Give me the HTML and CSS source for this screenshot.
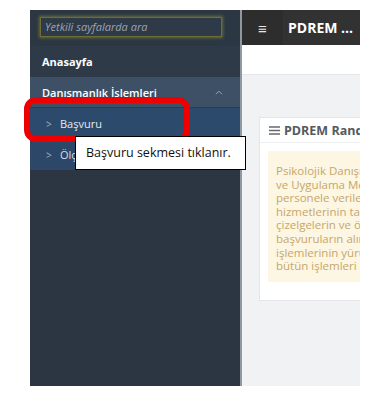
FILE: index.html
```html
<!DOCTYPE html>
<html lang="tr">
<head>
<meta charset="utf-8">
<title>PDREM</title>
<link rel="stylesheet" href="styles.css">
</head>
<body>
<div class="stage">
  <div class="frame">
    <aside class="sidebar">
      <div class="search">
        <div class="search-input">Yetkili sayfalarda ara</div>
      </div>
      <div class="nav-item">Anasayfa</div>
      <div class="nav-group">
        <span>Danışmanlık İşlemleri</span>
        <svg class="chev" width="8" height="5" viewBox="0 0 8 5"><path d="M1 4.2 L4 1.2 L7 4.2" fill="none" stroke="#9aa7b5" stroke-width="1"/></svg>
      </div>
      <div class="sub-item sub-active"><span class="arrow">&gt;</span><span>Başvuru</span></div>
      <div class="sub-item"><span class="arrow">&gt;</span><span>Ölçekler</span></div>
    </aside>
    <main class="main">
      <header class="topbar">
        <div class="toggler">&#8801;</div>
        <div class="brand">PDREM ...</div>
      </header>
      <div class="pagebar"></div>
      <div class="content">
        <section class="card">
          <div class="card-head">
            <svg class="bars" width="11" height="9" viewBox="0 0 11 9"><path d="M0 1 H11 M0 4.5 H11 M0 8 H11" stroke="#666a70" stroke-width="1.4"/></svg>
            <span>PDREM Randevu Sistemi</span>
          </div>
          <div class="card-body">
            <div class="alert">
              <span class="line">Psikolojik Danışmanlık ve Rehberlik Eğitimi</span>
              <span class="line">ve Uygulama Merkezi tarafından öğrenci ve</span>
              <span class="line">personele verilen danışmanlık</span>
              <span class="line">hizmetlerinin takibi, randevu</span>
              <span class="line">çizelgelerin ve ölçeklerin hazırlanması,</span>
              <span class="line">başvuruların alınması ve değerlendirme</span>
              <span class="line">işlemlerinin yürütülmesi gibi</span>
              <span class="line">bütün işlemleri bu sistem üzerinden yapılır.</span>
            </div>
          </div>
        </section>
      </div>
    </main>
  </div>
  <div class="highlight"></div>
  <div class="callout">Başvuru sekmesi tıklanır.</div>
</div>
</body>
</html>
```
FILE: styles.css
```css
html, body {
  margin: 0;
  padding: 0;
  background: #ffffff;
}
.stage {
  position: relative;
  width: 379px;
  height: 403px;
  overflow: hidden;
  font-family: "Open Sans", "Noto Sans", sans-serif;
}
.frame {
  position: relative;
  margin: 10px 0 0 30px;
  width: 330px;
  height: 376px;
  display: flex;
  overflow: hidden;
}
.sidebar {
  width: 210px;
  flex: none;
  background: #2c3642;
  border-right: 2px solid #8e99a4;
  display: flex;
  flex-direction: column;
}
.search {
  height: 36px;
  box-sizing: border-box;
  padding: 7px 18px 0 10px;
  background: #2c3744;
}
.search-input {
  height: 20px;
  box-sizing: border-box;
  border: 1px solid #6e6d34;
  box-shadow: 0 0 3px 1px rgba(150, 150, 50, 0.55);
  background: #2e3a48;
  color: #9aa5b1;
  font-style: italic;
  font-size: 11px;
  line-height: 18px;
  padding-left: 4px;
}
.nav-item {
  height: 31px;
  display: flex;
  align-items: center;
  padding-left: 12px;
  color: #ffffff;
  font-weight: 700;
  font-size: 11px;
  background: #2e3a48;
}
.nav-group {
  height: 30px;
  display: flex;
  align-items: center;
  justify-content: space-between;
  padding: 0 17px 0 12px;
  background: #3d5065;
  color: #ffffff;
  font-weight: 600;
  font-size: 11px;
  border-bottom: 1px solid #2d3c4c;
}
.sub-item {
  height: 31px;
  display: flex;
  align-items: center;
  padding-left: 16px;
  background: #2c4767;
  color: #d8dee5;
  font-size: 11px;
}
.sub-active {
  background: #2b4a6c;
  color: #e6ebf0;
}
.arrow {
  width: 14px;
  color: #a9b4c0;
  font-size: 10px;
}
.main {
  flex: 1;
  min-width: 0;
  background: #f1f2f4;
  display: flex;
  flex-direction: column;
}
.topbar {
  height: 35px;
  flex: none;
  display: flex;
  align-items: center;
  background: #323232;
}
.toggler {
  width: 41px;
  height: 100%;
  display: flex;
  align-items: center;
  justify-content: center;
  background: #2d2d2d;
  color: #e8e8e8;
  font-size: 15px;
}
.brand {
  padding-left: 5px;
  color: #ffffff;
  font-weight: 700;
  font-size: 14px;
  white-space: nowrap;
}
.pagebar {
  height: 29px;
  flex: none;
  background: #ffffff;
  border-bottom: 1px solid #e4e6e9;
}
.content {
  padding: 42px 0 0 17px;
}
.card {
  width: 300px;
  background: #ffffff;
  border: 1px solid #e3e5e8;
}
.card-head {
  height: 24px;
  padding-left: 9px;
  display: flex;
  align-items: center;
  gap: 4px;
  border-bottom: 1px solid #eceef0;
  color: #555a60;
  font-weight: 700;
  font-size: 12.5px;
  white-space: nowrap;
}
.bars {
  flex: none;
}
.card-body {
  padding: 8px 0 18px 8px;
}
.alert {
  height: 131px;
  box-sizing: border-box;
  padding: 13px 0 0 8px;
  background: #fcf6e2;
  color: #c7a66c;
  font-size: 11.5px;
  line-height: 13.6px;
}
.line {
  display: block;
  white-space: nowrap;
}
.highlight {
  position: absolute;
  left: 24px;
  top: 97px;
  width: 166px;
  height: 45px;
  box-sizing: border-box;
  border: 6px solid #ee0000;
  border-radius: 12px;
}
.callout {
  position: absolute;
  left: 75px;
  top: 136px;
  width: 171px;
  height: 34px;
  box-sizing: border-box;
  border: 1px solid #000000;
  background: #ffffff;
  padding-left: 10px;
  color: #111111;
  font-size: 12.5px;
  line-height: 32px;
  white-space: nowrap;
}
```
